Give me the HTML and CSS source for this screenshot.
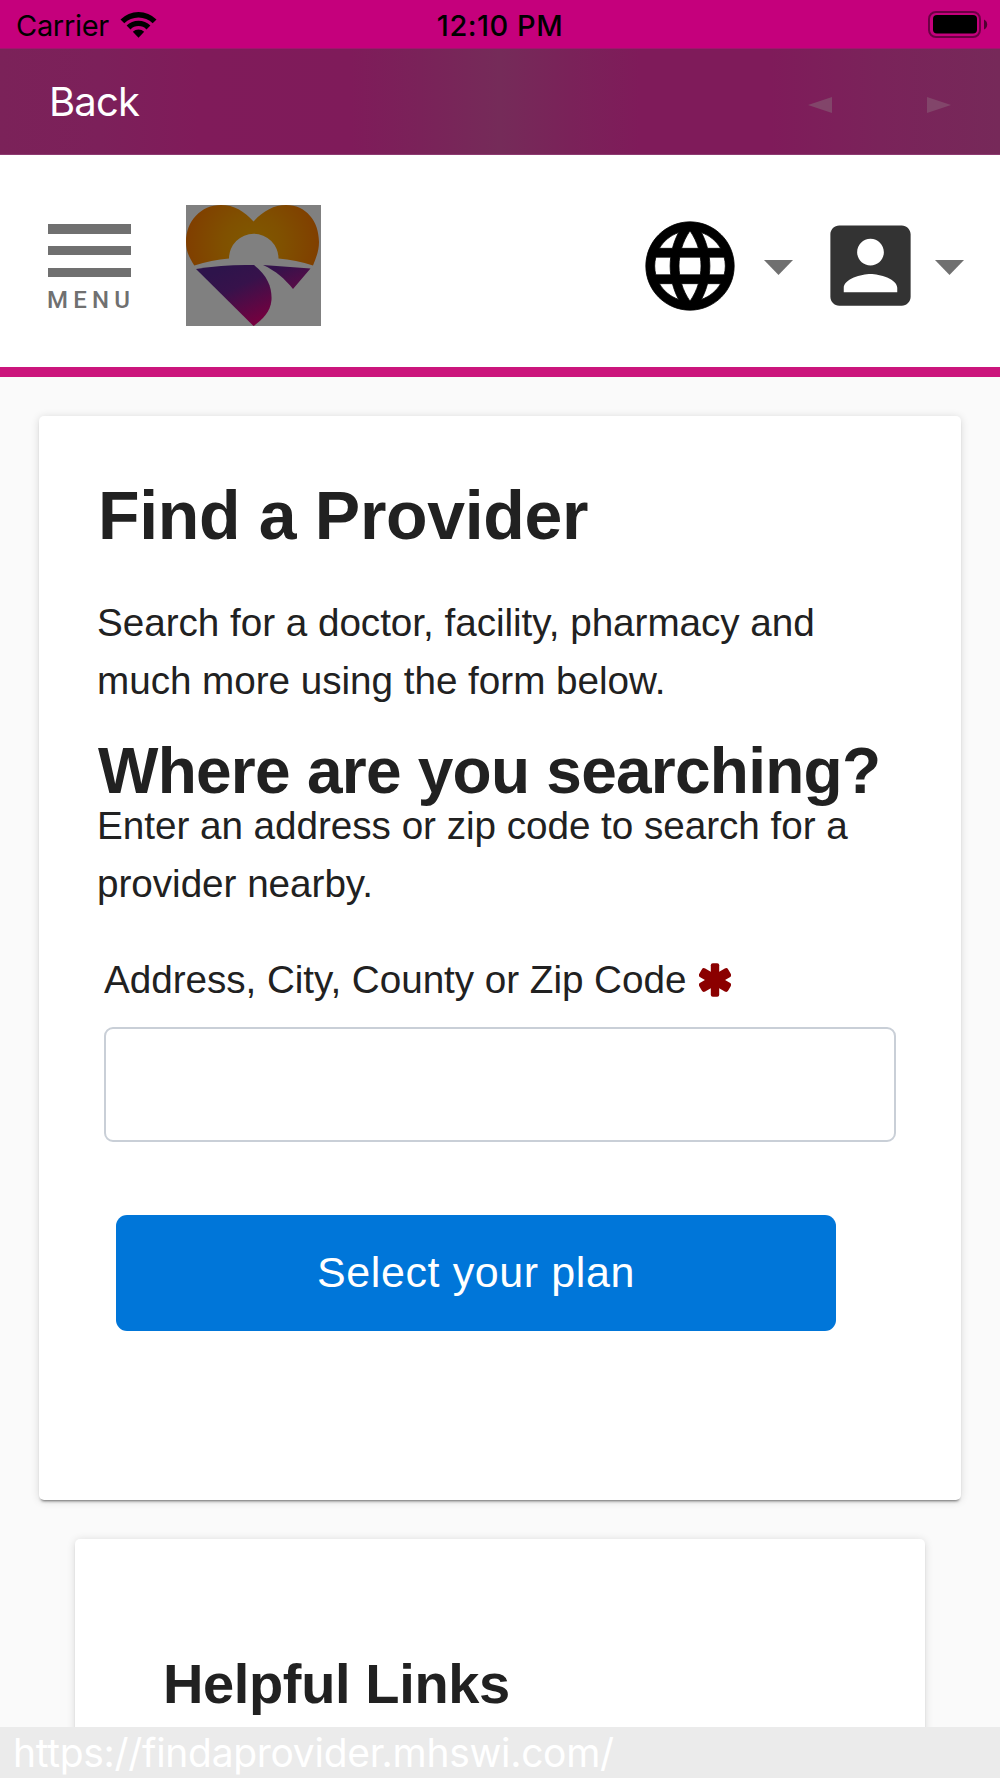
FILE: index.html
```html
<!DOCTYPE html>
<html lang="en">
<head>
<meta charset="utf-8">
<title>Find a Provider</title>
<link rel="stylesheet" href="styles.css">
</head>
<body>
<div class="status-bar">
  <div class="carrier">
    <span class="carrier-name">Carrier</span>
    <svg class="wifi" width="37" height="28" viewBox="0 0 37 28">
      <path d="M0.5 8.5 A25.5 25.5 0 0 1 36.5 8.5 L32.7 12.3 A20 20 0 0 0 4.3 12.3 Z"/>
      <path d="M6.6 14.6 A16.8 16.8 0 0 1 30.4 14.6 L26.5 18.4 A11.3 11.3 0 0 0 10.5 18.4 Z"/>
      <path d="M12.8 20.8 A8.1 8.1 0 0 1 24.2 20.8 L18.5 26.7 Z"/>
    </svg>
  </div>
  <div class="clock">12:10 PM</div>
  <svg class="battery" width="60" height="27" viewBox="0 0 60 27">
    <rect x="1" y="1" width="51" height="25" rx="7" fill="none" stroke="#000" stroke-opacity=".45" stroke-width="2"/>
    <rect x="5" y="4" width="44" height="18.500" rx="4"/>
    <path d="M56 8.500 Q59.200 10 59.200 13.500 Q59.200 17 56 18.500 Z" fill-opacity=".6"/>
  </svg>
</div>
<nav class="nav-bar">
  <span class="back">Back</span>
  <div class="history">
    <svg width="24" height="16" viewBox="0 0 24 16"><path d="M0 8 L24 0 V16 Z"/></svg>
    <svg width="24" height="16" viewBox="0 0 24 16"><path d="M24 8 L0 0 V16 Z"/></svg>
  </div>
</nav>
<header class="site-header">
  <div class="menu">
    <span class="bar"></span><span class="bar"></span><span class="bar"></span>
    <span class="menu-label">MENU</span>
  </div>
  <svg class="logo" width="135" height="121" viewBox="0 0 135 121">
    <defs>
      <radialGradient id="sun" gradientUnits="userSpaceOnUse" cx="67" cy="40" r="68">
        <stop offset="0" stop-color="#805a00"/><stop offset=".45" stop-color="#805000"/><stop offset="1" stop-color="#803e00"/>
      </radialGradient>
      <linearGradient id="road" gradientUnits="userSpaceOnUse" x1="45" y1="60" x2="72" y2="118">
        <stop offset="0" stop-color="#2e144b"/><stop offset=".35" stop-color="#37124b"/><stop offset="1" stop-color="#76003f"/>
      </linearGradient>
      <linearGradient id="field" gradientUnits="userSpaceOnUse" x1="98" y1="60" x2="108" y2="84">
        <stop offset="0" stop-color="#34134b"/><stop offset="1" stop-color="#580b47"/>
      </linearGradient>
    </defs>
    <rect width="135" height="121" fill="#808080"/>
    <path fill="url(#sun)" d="M8.300 60.500 C3 52 0 46 0 37 C0 16 15 0 35 0 C48 0 58 6 67.500 16.500 C77 6 88 0 100 0 C120 0 133 16 133 37 C133 46 130 53 127 60.500 C116 57 104 54.500 92.500 53.500 A24.700 24.700 0 1 0 43 53.500 C31 54.500 20 57 8.300 60.500 Z"/>
    <path fill="url(#road)" d="M10 64 C30 60.500 50 59.500 68 60 C82 71 86 83 85.500 95 C84.500 107 76 115 67.500 121 Z"/>
    <path fill="url(#field)" d="M77 60 L124.500 63.500 L107 84 C99 74 90 66 77 60 Z"/>
  </svg>
  <div class="header-tools">
    <svg class="globe" width="106" height="106" viewBox="0 0 24 24"><path d="M11.990 2C6.470 2 2 6.480 2 12s4.470 10 9.990 10C17.520 22 22 17.520 22 12S17.520 2 11.990 2zm6.930 6h-2.950c-.320-1.250-.780-2.450-1.380-3.560 1.840.630 3.370 1.910 4.330 3.560zM12 4.040c.830 1.200 1.480 2.530 1.910 3.960h-3.820c.430-1.430 1.080-2.760 1.910-3.960zM4.260 14C4.100 13.360 4 12.690 4 12s.100-1.360.260-2h3.380c-.080.660-.140 1.320-.140 2 0 .680.060 1.340.140 2H4.260zm.820 2h2.950c.320 1.250.780 2.450 1.380 3.560-1.840-.630-3.370-1.900-4.330-3.560zm2.950-8H5.080c.960-1.660 2.490-2.930 4.330-3.560C8.810 5.550 8.350 6.750 8.030 8zM12 19.960c-.830-1.200-1.480-2.530-1.910-3.960h3.820c-.430 1.430-1.080 2.760-1.910 3.960zM14.340 14H9.660c-.090-.660-.160-1.320-.160-2 0-.680.070-1.350.160-2h4.680c.090.650.160 1.320.160 2 0 .680-.070 1.340-.160 2zm.250 5.560c.600-1.110 1.060-2.310 1.380-3.560h2.950c-.960 1.650-2.490 2.930-4.330 3.560zM16.360 14c.080-.660.140-1.320.140-2 0-.680-.060-1.340-.140-2h3.380c.160.640.260 1.310.260 2s-.100 1.360-.260 2h-3.380z"/></svg>
    <svg class="caret" width="29" height="15" viewBox="0 0 29 15"><path d="M0 0 H29 L14.500 15 Z"/></svg>
    <svg class="account" width="107" height="107" viewBox="0 0 24 24"><path d="M3 5v14c0 1.100.890 2 2 2h14c1.100 0 2-.900 2-2V5c0-1.100-.900-2-2-2H5c-1.110 0-2 .900-2 2zm12 4c0 1.660-1.340 3-3 3s-3-1.340-3-3 1.340-3 3-3 3 1.340 3 3zm-9 8c0-2 4-3.100 6-3.100s6 1.100 6 3.100v1H6v-1z"/></svg>
    <svg class="caret" width="29" height="15" viewBox="0 0 29 15"><path d="M0 0 H29 L14.500 15 Z"/></svg>
  </div>
</header>
<main class="content">
  <section class="card search-card">
    <h1>Find a Provider</h1>
    <p class="intro">Search for a doctor, facility, pharmacy and<br>much more using the form below.</p>
    <h2>Where are you searching?</h2>
    <p class="hint">Enter an address or zip code to search for a<br>provider nearby.</p>
    <label class="field-label" for="address">Address, City, County or Zip Code
      <svg width="32" height="34" viewBox="-16 -17 32 34"><rect x="-4.200" y="-16.700" width="8.400" height="33.400" rx="2"/><rect x="-5" y="-16.700" width="10" height="33.400" rx="2.500" transform="rotate(60)"/><rect x="-5" y="-16.700" width="10" height="33.400" rx="2.500" transform="rotate(120)"/></svg>
    </label>
    <input class="field" id="address" type="text">
    <button class="plan-button" type="button">Select your plan</button>
  </section>
  <section class="card links-card">
    <h3>Helpful Links</h3>
  </section>
</main>
<footer class="url-bar">https://findaprovider.mhswi.com/</footer>
</body>
</html>
```
FILE: styles.css
```css
* { box-sizing: border-box; }
body {
  margin: 0;
  width: 1000px;
  height: 1778px;
  display: flex;
  flex-direction: column;
  overflow: hidden;
  background: #fafafa;
  color: #212121;
  font-family: "Liberation Sans", Arial, sans-serif;
}
svg { display: block; flex: none; }
h1, h2, h3, p { margin: 0; white-space: nowrap; }

.status-bar {
  height: 48px;
  flex: none;
  display: grid;
  grid-template-columns: 1fr auto 1fr;
  align-items: center;
  padding: 0 12px 0 16px;
  background: #c5007c;
  color: #000;
  font: 29px/46px Inter, sans-serif;
}
.carrier { display: flex; align-items: center; gap: 11px; }
.carrier-name { padding-top: 3px; letter-spacing: -0.3px; }
.clock { padding: 3px 4px 0 0; font-weight: 550; letter-spacing: 0.5px; }
.battery { justify-self: end; }

.nav-bar {
  height: 107px;
  flex: none;
  display: flex;
  align-items: center;
  justify-content: space-between;
  padding: 0 49px 0 49px;
  border-top: 1px solid #a0156d;
  border-bottom: 1px solid #8d3a70;
  background: linear-gradient(90deg, #7b2259 0%, #7c205a 10%, #801b5a 20%, #7f1b5a 35%, #7a2259 42%, #752b59 50%, #7a2259 57%, #7f1b5a 64%, #7f1b5a 77%, #7a235a 88%, #762959 100%);
}
.back { color: #fff; font: 40px/105px Inter, sans-serif; letter-spacing: -0.8px; }
.history { display: flex; gap: 95px; padding-top: 7px; fill: #82456a; }

.site-header {
  height: 222px;
  flex: none;
  display: flex;
  align-items: center;
  padding: 0 36px 0 48px;
  border-bottom: 10px solid #cb157c;
  background: #fff;
}
.menu { display: flex; flex-direction: column; gap: 12.500px; width: 83px; padding-top: 12px; }
.bar { height: 9.200px; background: #707070; }
.menu-label {
  margin-top: 0;
  margin-left: -1px;
  color: #707070;
  font: 500 24px/20px Roboto, sans-serif;
  letter-spacing: 5.200px;
}
.logo { margin: 9px 0 0 55px; }
.header-tools { display: flex; align-items: center; height: 212px; margin-left: auto; }
.globe { margin-top: 9px; stroke: #000; stroke-width: 0.18px; }
.caret { fill: #707070; margin-top: 13px; }
.globe + .caret { margin-left: 21px; }
.account { margin: 8px 11px 0 24px; fill: #333; }

.content { flex: 1; min-height: 0; padding: 38.500px 39px 0; overflow: hidden; }
.card {
  background: #fff;
  border-radius: 5px;
  box-shadow: 0 3px 3px -2px rgba(0, 0, 0, 0.55), 0 1px 8px rgba(0, 0, 0, 0.14);
}
.search-card { height: 1084.500px; padding: 59.500px 58px 0; }
h1 { padding-left: 1px; font-size: 68px; line-height: 80px; letter-spacing: -0.320px; }
.intro, .hint { font-size: 38.670px; line-height: 58px; letter-spacing: -0.030px; }
.intro { margin-top: 39px; }
h2 { margin-top: 29px; padding-left: 1px; font-size: 64px; line-height: 64px; letter-spacing: -0.750px; }
.hint { margin-top: -6px; }
.field-label {
  display: flex;
  align-items: center;
  gap: 13px;
  margin: 38px 0 0 7px;
  font-size: 38.670px;
  line-height: 58px;
  letter-spacing: -0.040px;
}
.field-label svg { fill: #8b0000; margin-top: -1px; }
.field {
  display: block;
  width: 792px;
  height: 115px;
  margin: 18px 0 0 7px;
  padding: 0 24px;
  border: 2px solid #c9cfd7;
  border-radius: 9px;
  background: #fff;
  font: inherit;
  font-size: 38px;
}
.plan-button {
  display: block;
  width: 720px;
  height: 116px;
  margin: 73px 0 0 19px;
  padding: 0 0 2px;
  border: 0;
  border-radius: 11px;
  background: #0076d9;
  color: #fff;
  font: 43px "Liberation Sans", Arial, sans-serif;
  letter-spacing: 0.600px;
}
.links-card { height: 400px; margin: 39px 36px 0; padding: 113px 88px 0; }
h3 { font-size: 56px; line-height: 64px; letter-spacing: -0.370px; }

.url-bar {
  position: relative;
  height: 51px;
  flex: none;
  padding: 1px 0 0 13px;
  background: #ebebeb;
  color: #fff;
  font: 39px/50px Inter, sans-serif;
  letter-spacing: -0.300px;
}
```
